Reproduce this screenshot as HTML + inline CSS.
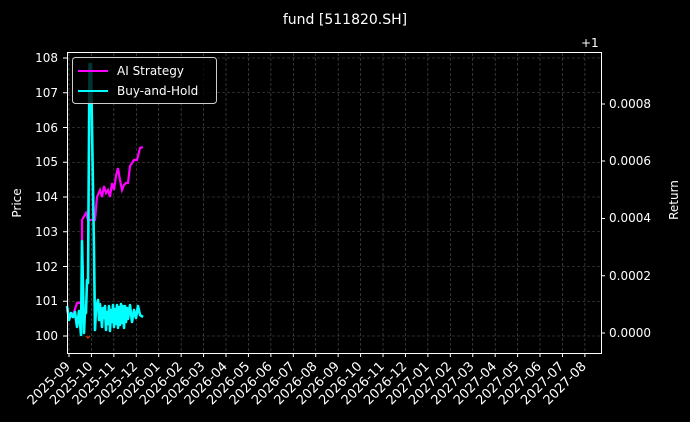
<!DOCTYPE html>
<html><head><meta charset="utf-8"><style>
html,body{margin:0;padding:0;background:#000;}
svg{display:block;}
text{font-family:"DejaVu Sans","Liberation Sans",sans-serif;fill:#fff;}
</style></head><body>
<svg width="690" height="422" viewBox="0 0 690 422" xmlns="http://www.w3.org/2000/svg">
<rect width="690" height="422" fill="#000"/>
<text x="345" y="24" font-size="14" text-anchor="middle">fund [511820.SH]</text>
<g stroke="#555" stroke-width="0.6" stroke-dasharray="3,2">
<line x1="67" x2="601" y1="58" y2="58"/><line x1="67" x2="601" y1="92.75" y2="92.75"/><line x1="67" x2="601" y1="127.5" y2="127.5"/><line x1="67" x2="601" y1="162.25" y2="162.25"/><line x1="67" x2="601" y1="197" y2="197"/><line x1="67" x2="601" y1="231.75" y2="231.75"/><line x1="67" x2="601" y1="266.5" y2="266.5"/><line x1="67" x2="601" y1="301.25" y2="301.25"/><line x1="67" x2="601" y1="336" y2="336"/>
<path d="M69 53V353M91.43 53V353M113.86 53V353M136.29 53V353M158.72 53V353M181.15 53V353M203.58 53V353M226.01 53V353M248.44 53V353M270.87 53V353M293.3 53V353M315.73 53V353M338.16 53V353M360.59 53V353M383.02 53V353M405.45 53V353M427.88 53V353M450.31 53V353M472.74 53V353M495.17 53V353M517.6 53V353M540.03 53V353M562.46 53V353M584.89 53V353"/>
</g>
<polyline fill="none" stroke="#ff00ff" stroke-width="2.2" points="67,310 70,318 74,312 77,303 80,303 82,300 82,220 86,213 88,220 93,220 95,220 97,197 100,190 102,197 104,186 106,193 108,190 110,197 112,183 114,190 116,176 118,168 120,180 122,190 124,185 126,183 128,183 130,166 134,160 137,160 140,148 143,147"/>
<polyline fill="none" stroke="#00ffff" stroke-width="2.6" stroke-linejoin="round" points="67,306 69,320 71,313 73,317 75,312 77,327 79,311 81,335 82,241 84,333 85,310 86,313 87,280 88,283 89.5,64 91,64 94,250 95,330 96,308 98,300 99,320 100,304 102,327 103,308 104,318 105,306 106,330 107,312 108,324 109,306 110,331 111,310 112,322 113,305 114,327 115,309 116,324 117,305 118,328 119,307 120,325 121,304 122,323 123,306 124,328 125,306 126,322 127,308 128,319 130,305 132,322 134,310 136,318 138,306 140,315 143,317"/>
<polyline fill="none" stroke="#ff3300" stroke-width="1" points="86,336 88,338 90,336"/>
<rect x="67.5" y="52.5" width="534" height="301" fill="none" stroke="#fff" stroke-width="1"/>
<g font-size="12" text-anchor="end">
<text x="58" y="62">108</text><text x="58" y="97">107</text><text x="58" y="132">106</text><text x="58" y="166">105</text><text x="58" y="201">104</text><text x="58" y="236">103</text><text x="58" y="271">102</text><text x="58" y="305">101</text><text x="58" y="340">100</text>
</g>
<g stroke="#fff" stroke-width="1">
<path d="M63 58H67M63 92.75H67M63 127.5H67M63 162.25H67M63 197H67M63 231.75H67M63 266.5H67M63 301.25H67M63 336H67"/>
<path d="M601 104H605M601 161H605M601 218.5H605M601 275.7H605M601 333H605"/>
<path d="M69 353V357M91.43 353V357M113.86 353V357M136.29 353V357M158.72 353V357M181.15 353V357M203.58 353V357M226.01 353V357M248.44 353V357M270.87 353V357M293.3 353V357M315.73 353V357M338.16 353V357M360.59 353V357M383.02 353V357M405.45 353V357M427.88 353V357M450.31 353V357M472.74 353V357M495.17 353V357M517.6 353V357M540.03 353V357M562.46 353V357M584.89 353V357"/>
</g>
<g font-size="12">
<text x="609" y="108">0.0008</text><text x="609" y="165">0.0006</text><text x="609" y="222">0.0004</text><text x="609" y="280">0.0002</text><text x="609" y="337">0.0000</text>
<text x="581" y="47">+1</text>
</g>
<text transform="translate(21,203) rotate(-90)" font-size="12" text-anchor="middle">Price</text>
<text transform="translate(678,200) rotate(-90)" font-size="12" text-anchor="middle">Return</text>
<g font-size="13" text-anchor="end">
<text transform="translate(71,367) rotate(-45)">2025-09</text>
<text transform="translate(93.43,367) rotate(-45)">2025-10</text>
<text transform="translate(115.86,367) rotate(-45)">2025-11</text>
<text transform="translate(138.29,367) rotate(-45)">2025-12</text>
<text transform="translate(160.72,367) rotate(-45)">2026-01</text>
<text transform="translate(183.15,367) rotate(-45)">2026-02</text>
<text transform="translate(205.58,367) rotate(-45)">2026-03</text>
<text transform="translate(228.01,367) rotate(-45)">2026-04</text>
<text transform="translate(250.44,367) rotate(-45)">2026-05</text>
<text transform="translate(272.87,367) rotate(-45)">2026-06</text>
<text transform="translate(295.3,367) rotate(-45)">2026-07</text>
<text transform="translate(317.73,367) rotate(-45)">2026-08</text>
<text transform="translate(340.16,367) rotate(-45)">2026-09</text>
<text transform="translate(362.59,367) rotate(-45)">2026-10</text>
<text transform="translate(385.02,367) rotate(-45)">2026-11</text>
<text transform="translate(407.45,367) rotate(-45)">2026-12</text>
<text transform="translate(429.88,367) rotate(-45)">2027-01</text>
<text transform="translate(452.31,367) rotate(-45)">2027-02</text>
<text transform="translate(474.74,367) rotate(-45)">2027-03</text>
<text transform="translate(497.17,367) rotate(-45)">2027-04</text>
<text transform="translate(519.6,367) rotate(-45)">2027-05</text>
<text transform="translate(542.03,367) rotate(-45)">2027-06</text>
<text transform="translate(564.46,367) rotate(-45)">2027-07</text>
<text transform="translate(586.89,367) rotate(-45)">2027-08</text>
</g>
<rect x="72.5" y="57.5" width="144" height="46" rx="3" fill="#000" fill-opacity="0.8" stroke="#ccc" stroke-width="1"/>
<line x1="78" x2="108" y1="71" y2="71" stroke="#ff00ff" stroke-width="2"/>
<line x1="78" x2="108" y1="91" y2="91" stroke="#00ffff" stroke-width="2"/>
<text x="117" y="75" font-size="12">AI Strategy</text>
<text x="117" y="95" font-size="12">Buy-and-Hold</text>
</svg>
</body></html>
